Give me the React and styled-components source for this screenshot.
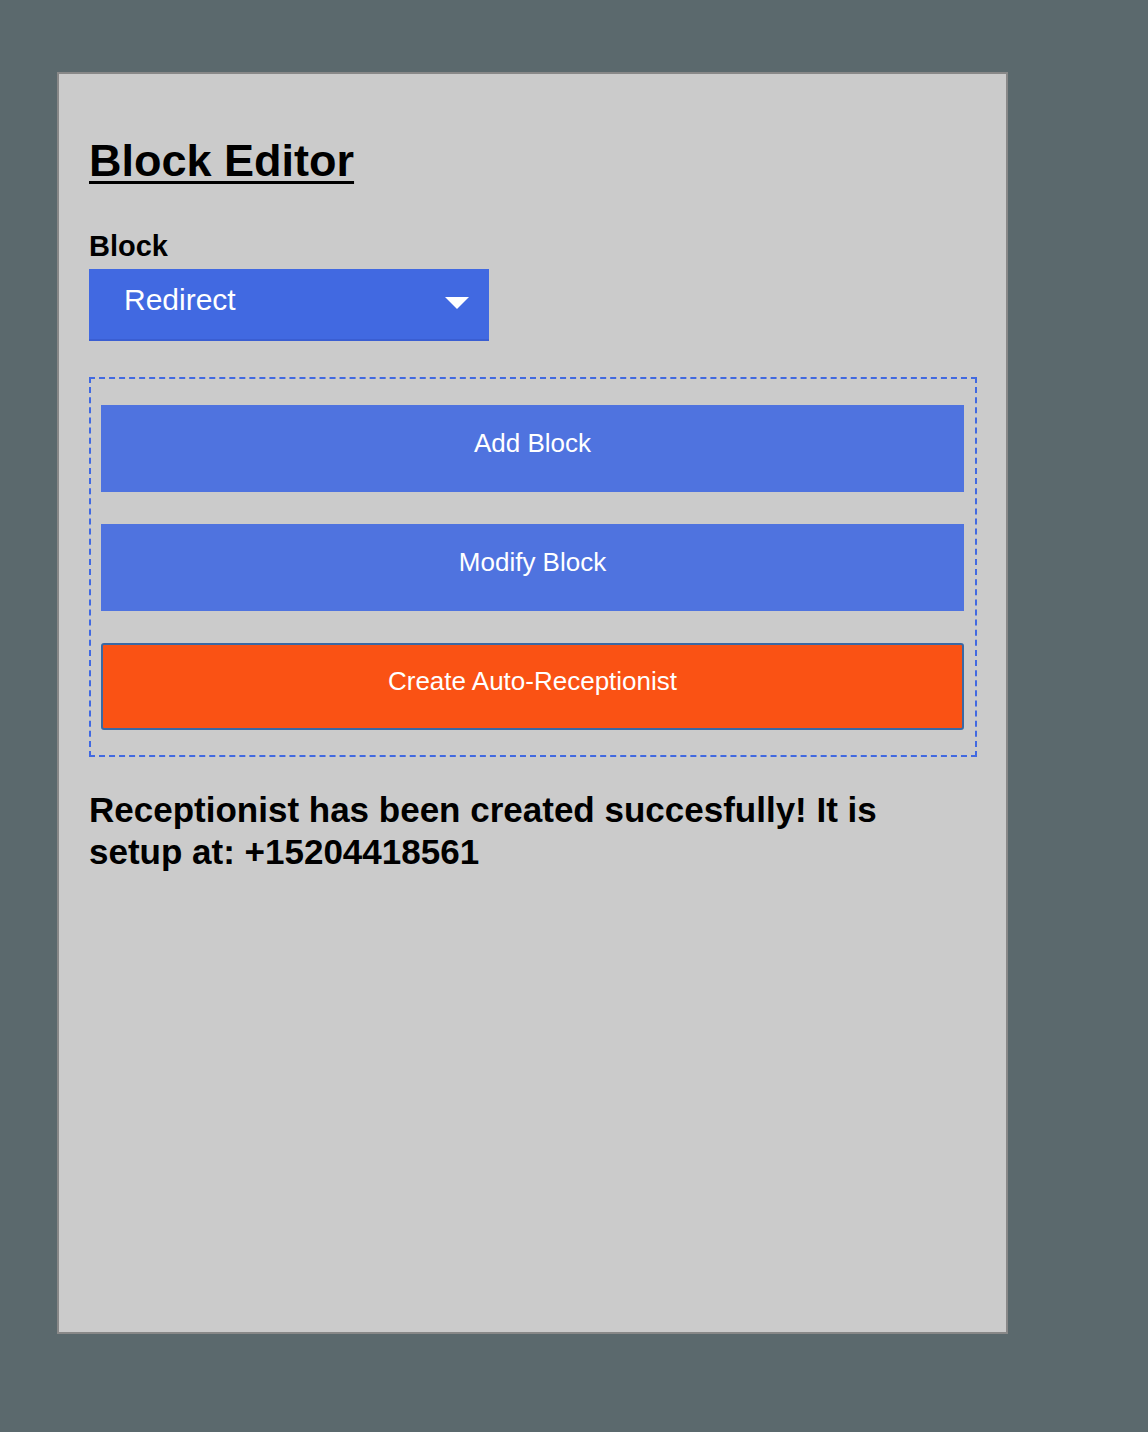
import React, { useState } from "react";
import styled, { createGlobalStyle } from "styled-components";

const GlobalStyle = createGlobalStyle`
  html, body {
    margin: 0;
    padding: 0;
    background-color: #5b696d;
    font-family: "Liberation Sans", Arial, Helvetica, sans-serif;
  }
`;

const Page = styled.div`
  min-height: 1432px;
  padding: 72px 0 0 57px;
  box-sizing: border-box;
`;

const Panel = styled.div`
  width: 951px;
  height: 1262px;
  box-sizing: border-box;
  background-color: #cbcbcb;
  border: 2px solid #888888;
  padding: 61px 29px 0 30px;
  display: flex;
  flex-direction: column;
`;

const Title = styled.h1`
  margin: 0 0 42px;
  font-size: 45px;
  line-height: 52px;
  font-weight: bold;
  text-decoration: underline;
  text-decoration-thickness: 3px;
  text-underline-offset: 5px;
  color: #000;
`;

const Label = styled.label`
  display: block;
  margin: 0 0 6px;
  font-size: 29px;
  line-height: 34px;
  font-weight: bold;
  color: #000;
`;

const Select = styled.div`
  width: 400px;
  height: 72px;
  box-sizing: border-box;
  background-color: #4169e1;
  border-bottom: 2px solid #3a5ed2;
  padding: 0 20px 8px 35px;
  display: flex;
  align-items: center;
  justify-content: space-between;
  color: #fff;
  font-size: 30px;
  cursor: pointer;
`;

const Arrow = styled.span`
  width: 0;
  height: 0;
  border-left: 12px solid transparent;
  border-right: 12px solid transparent;
  border-top: 12px solid #fff;
  margin-top: 6px;
`;

const ActionBox = styled.div`
  margin-top: 36px;
  border: 2px dashed #4169e1;
  padding: 26px 11px 25px 10px;
  display: flex;
  flex-direction: column;
  gap: 32px;
`;

const Button = styled.button`
  height: 87px;
  width: 100%;
  box-sizing: border-box;
  border: ${(p) => (p.$danger ? "2px solid #3a68a4" : "none")};
  border-radius: ${(p) => (p.$danger ? "3px" : "0")};
  background-color: ${(p) =>
    p.$danger ? "rgba(255, 69, 0, 0.9)" : "rgba(65, 105, 225, 0.9)"};
  color: #fff;
  font-family: "Liberation Sans", Arial, Helvetica, sans-serif;
  font-size: 26px;
  padding: 0 0 10px;
  cursor: pointer;
`;

const Message = styled.p`
  margin: 32px 0 0;
  max-width: 860px;
  font-size: 35px;
  line-height: 42px;
  font-weight: bold;
  color: #000;
`;

const App = () => {
  const [block] = useState("Redirect");

  return (
    <Page>
      <GlobalStyle />
      <Panel>
        <Title>Block Editor</Title>
        <Label>Block</Label>
        <Select>
          <span>{block}</span>
          <Arrow />
        </Select>
        <ActionBox>
          <Button>Add Block</Button>
          <Button>Modify Block</Button>
          <Button $danger>Create Auto-Receptionist</Button>
        </ActionBox>
        <Message>
          Receptionist has been created succesfully! It is setup at:
          +15204418561
        </Message>
      </Panel>
    </Page>
  );
};

export default App;
